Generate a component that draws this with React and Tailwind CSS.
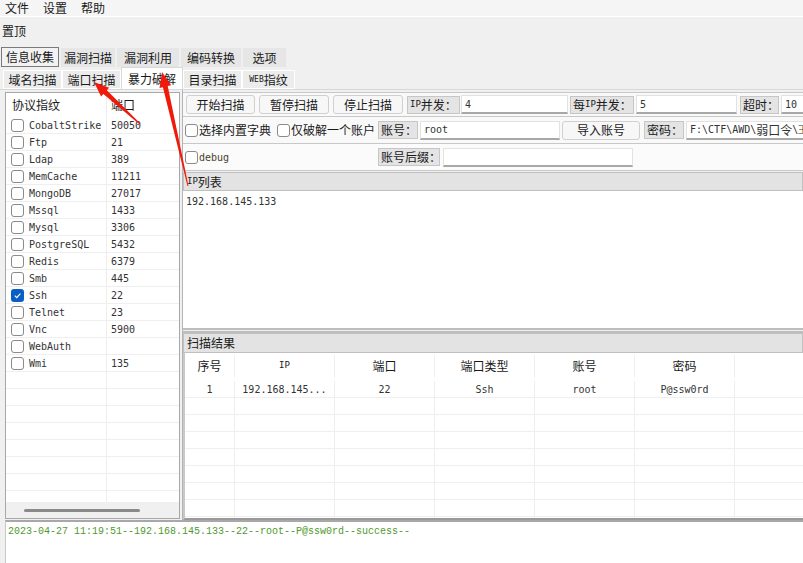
import React from "react";

const CJK = { fontFamily: '"Noto Sans CJK SC", "Noto Sans", sans-serif' };
const MONO = { fontFamily: '"DejaVu Sans Mono", "Liberation Mono", monospace' };
const LMONO = { fontFamily: '"Liberation Mono", "DejaVu Sans Mono", monospace' };

const protocols = [
  ["CobaltStrike", "50050"],
  ["Ftp", "21"],
  ["Ldap", "389"],
  ["MemCache", "11211"],
  ["MongoDB", "27017"],
  ["Mssql", "1433"],
  ["Mysql", "3306"],
  ["PostgreSQL", "5432"],
  ["Redis", "6379"],
  ["Smb", "445"],
  ["Ssh", "22", true],
  ["Telnet", "23"],
  ["Vnc", "5900"],
  ["WebAuth", ""],
  ["Wmi", "135"],
];

function Box({ checked }) {
  if (checked) {
    return (
      <div className="w-[13px] h-[13px] rounded-[3px] bg-[#0a5fc4] flex items-center justify-center shrink-0">
        <svg width="9" height="9" viewBox="0 0 10 10">
          <path d="M2 5.2 L4.1 7.3 L8.2 2.8" fill="none" stroke="#ffffff" strokeWidth="1.3" />
        </svg>
      </div>
    );
  }
  return <div className="w-[13px] h-[13px] rounded-[3px] border border-[#8a8a8a] bg-white shrink-0" />;
}

function Btn({ w, ml, children }) {
  return (
    <div
      className={`h-[19px] ${w} ${ml} rounded-[3px] border border-[#d0d0d0] bg-[#f7f7f7] flex items-center justify-center text-[12px] text-[#1a1a1a] shrink-0 whitespace-nowrap`}
      style={CJK}
    >
      {children}
    </div>
  );
}

function Label({ w, ml, children }) {
  return (
    <div
      className={`h-[18px] ${w} ${ml} border border-[#c6c6c6] bg-[#e4e4e4] flex items-center pl-[2px] text-[12px] text-[#1a1a1a] shrink-0 whitespace-nowrap overflow-hidden`}
      style={CJK}
    >
      {children}
    </div>
  );
}

function Input({ w, ml, children }) {
  return (
    <div
      className={`h-[19px] ${w} ${ml} bg-white border border-[#e2e2e2] border-b-[#a8a8a8] border-b-2 flex items-center pl-[3px] text-[10px] text-[#333] shrink-0 whitespace-nowrap overflow-hidden`}
      style={MONO}
    >
      {children}
    </div>
  );
}

const IP = ({ children }) => (
  <span className="text-[9px]" style={MONO}>
    {children}
  </span>
);

function Arrows() {
  return (
    <svg className="absolute left-0 top-0 pointer-events-none" width="803" height="563">
      <polygon
        fill="#f01a0a"
        points="140.3,123.6 106.8,90.3 109.1,87.7 94,82 101.1,96.5 103.4,93.9 139.7,124.4"
      />
      <polygon
        fill="#f01a0a"
        points="188.5,185.9 167.7,86.1 171.2,85.3 162,72 159.5,87.9 162.9,87.2 187.5,186.1"
      />
    </svg>
  );
}

export default function App() {
  const emptyRows = Array.from({ length: 9 });
  const tableRows = Array.from({ length: 8 });
  const cols = ["w-[50px]", "w-[100px]", "w-[100px]", "w-[100px]", "w-[100px]", "w-[100px]"];
  return (
    <div className="relative w-[803px] h-[563px] overflow-hidden bg-[#f0f0f0] flex flex-col text-[#1a1a1a]" style={CJK}>
      {/* menu bar */}
      <div className="h-[16px] bg-[#f5f5f5] flex items-center text-[12px] shrink-0">
        <span className="ml-[5px]">文件</span>
        <span className="ml-[14px]">设置</span>
        <span className="ml-[14px]">帮助</span>
      </div>
      <div className="h-[1px] bg-[#ffffff] shrink-0" />
      {/* 置顶 */}
      <div className="h-[29px] flex items-center text-[12px] shrink-0 pb-[2px]">
        <span className="ml-[2px]">置顶</span>
      </div>
      {/* tab row 1 */}
      <div className="h-[21px] flex items-end text-[12px] shrink-0 pl-[1px]">
        <div className="h-[20px] w-[58px] border border-[#7a7a7a] bg-[#f2f2f2] flex items-center justify-center">信息收集</div>
        <div className="h-[19px] w-[54px] ml-[2px] bg-[#e6e6e6] flex items-center justify-center">漏洞扫描</div>
        <div className="h-[19px] w-[62px] ml-[2px] bg-[#e6e6e6] flex items-center justify-center">漏洞利用</div>
        <div className="h-[19px] w-[60px] ml-[2px] bg-[#e6e6e6] flex items-center justify-center">编码转换</div>
        <div className="h-[19px] w-[43px] ml-[2px] bg-[#e6e6e6] flex items-center justify-center">选项</div>
      </div>
      {/* tab row 2 */}
      <div className="h-[22px] flex items-end text-[12px] shrink-0 pl-[3px]">
        <div className="h-[19px] w-[59px] bg-[#ececec] border border-[#ffffff] flex items-center justify-center">域名扫描</div>
        <div className="h-[19px] w-[59px] bg-[#ececec] border border-[#ffffff] flex items-center justify-center">端口扫描</div>
        <div className="h-[22px] w-[62px] bg-white border border-[#d8d8d8] border-b-0 flex items-center justify-center">暴力破解</div>
        <div className="h-[19px] w-[59px] bg-[#ececec] border border-[#ffffff] flex items-center justify-center">目录扫描</div>
        <div className="h-[19px] w-[53px] bg-[#ececec] border border-[#ffffff] flex items-center justify-center">
          <span className="text-[8px]" style={MONO}>WEB</span>指纹
        </div>
      </div>
      {/* main */}
      <div className="flex-1 flex min-h-0 bg-white border-t border-[#d8d8d8]">
        {/* left panel */}
        <div className="pl-[5px] pt-[2px] pb-[1px] flex bg-[#f0f0f0]">
          <div className="w-[175px] bg-white border border-[#a8a8a8] flex flex-col min-h-0">
            <div className="h-[24px] flex items-center text-[12px] shrink-0">
              <div className="w-[101px] pl-[6px] h-full flex items-center border-r border-[#eeeeee]">协议指纹</div>
              <div className="pl-[4px]">端口</div>
            </div>
            <div className="flex-1 min-h-0 overflow-hidden">
              {protocols.map(([name, port, checked]) => (
                <div key={name} className="h-[17px] flex items-center border-b border-[#efefef]">
                  <div className="w-[101px] h-full flex items-center pl-[5px] border-r border-[#eeeeee]">
                    <Box checked={checked} />
                    <span className="ml-[5px] text-[10px] text-[#333]" style={MONO}>{name}</span>
                  </div>
                  <span className="ml-[4px] text-[10px] text-[#333]" style={MONO}>{port}</span>
                </div>
              ))}
              {emptyRows.map((_, i) => (
                <div key={i} className="h-[17px] flex border-b border-[#efefef]">
                  <div className="w-[101px] h-full border-r border-[#eeeeee]" />
                </div>
              ))}
            </div>
            <div className="h-[16px] bg-[#f0f0f0] flex items-center shrink-0">
              <div className="ml-[18px] w-[116px] h-[3px] rounded-full bg-[#8a8a8a]" />
            </div>
          </div>
        </div>
        {/* splitter */}
        <div className="w-[3px] bg-[#f0f0f0] border-r border-[#b4b4b4]" />
        {/* right panel */}
        <div className="flex-1 flex flex-col min-w-0 bg-[#f0f0f0] pt-[2px]">
          {/* row1 */}
          <div className="h-[25px] flex items-center pl-[3px] bg-[#f9f9f9] border-t border-b border-[#c8c8c8] shrink-0">
            <Btn w="w-[69px]" ml="">开始扫描</Btn>
            <Btn w="w-[70px]" ml="ml-[4px]">暂停扫描</Btn>
            <Btn w="w-[70px]" ml="ml-[4px]">停止扫描</Btn>
            <Label w="w-[53px]" ml="ml-[4px]"><IP>IP</IP>并发：</Label>
            <Input w="w-[107px]" ml="ml-[1px]">4</Input>
            <Label w="w-[64px]" ml="ml-[2px]">每<IP>IP</IP>并发：</Label>
            <Input w="w-[101px]" ml="ml-[2px]">5</Input>
            <Label w="w-[39px]" ml="ml-[3px]">超时：</Label>
            <Input w="w-[40px]" ml="ml-[2px]">10</Input>
          </div>
          {/* row2 */}
          <div className="h-[27px] flex items-center pl-[2px] bg-[#f9f9f9] border-b border-[#c8c8c8] shrink-0 text-[12px] whitespace-nowrap">
            <Box />
            <span className="ml-[1px] shrink-0">选择内置字典</span>
            <div className="ml-[6px] shrink-0"><Box /></div>
            <span className="ml-[1px] shrink-0">仅破解一个账户</span>
            <Label w="w-[40px]" ml="ml-[3px]">账号：</Label>
            <Input w="w-[140px]" ml="ml-[2px]">root</Input>
            <Btn w="w-[78px]" ml="ml-[2px]">导入账号</Btn>
            <Label w="w-[40px]" ml="ml-[4px]">密码：</Label>
            <Input w="w-[130px]" ml="ml-[2px]">
              F:\CTF\AWD\<span style={CJK} className="text-[12px]">弱口令</span>\王
            </Input>
          </div>
          {/* row3 */}
          <div className="h-[27px] flex items-center pl-[2px] bg-[#fbfbfb] border-b border-[#c8c8c8] shrink-0">
            <Box />
            <span className="ml-[1px] text-[10px] text-[#4a3f2a]" style={MONO}>debug</span>
            <Label w="w-[62px]" ml="ml-[149px]">账号后缀：</Label>
            <Input w="w-[190px]" ml="ml-[3px]"></Input>
          </div>
          {/* IP 列表 */}
          <div className="h-[19px] mt-[1px] flex items-center pl-[3px] bg-[#e3e3e3] border border-[#c0c0c0] text-[12px] shrink-0">
            <IP>IP</IP>列表
          </div>
          <div className="h-[137px] bg-white pl-[3px] pt-[5px] shrink-0 text-[10px] leading-[12px] text-[#333]" style={MONO}>
            192.168.145.133
          </div>
          <div className="h-[5px] border-t-2 border-b-2 border-[#bdbdbd] bg-[#f0f0f0] shrink-0" />
          {/* 扫描结果 */}
          <div className="h-[20px] flex items-center pl-[3px] bg-[#e3e3e3] border border-[#c0c0c0] text-[12px] shrink-0">
            扫描结果
          </div>
          <div className="flex-1 min-h-0 bg-white border-l-2 border-[#c8c8c8] border-b-2 border-b-[#9a9a9a] overflow-hidden">
            <div className="h-[28px] flex text-[12px]">
              {["序号", "IP", "端口", "端口类型", "账号", "密码"].map((h, i) => (
                <div key={h} className={`${cols[i]} h-[22px] mt-[2px] flex items-center justify-center border-r border-[#eeeeee] shrink-0`}>
                  {h === "IP" ? <IP>IP</IP> : h}
                </div>
              ))}
            </div>
            <div className="h-[17px] flex items-center border-b border-[#efefef] text-[10px] text-[#333]" style={MONO}>
              {["1", "192.168.145...", "22", "Ssh", "root", "P@ssw0rd"].map((c, i) => (
                <div key={i} className={`${cols[i]} h-full flex items-center justify-center border-r border-[#eeeeee] shrink-0`}>
                  {c}
                </div>
              ))}
            </div>
            {tableRows.map((_, r) => (
              <div key={r} className="h-[17px] flex border-b border-[#efefef]">
                {cols.map((c, i) => (
                  <div key={i} className={`${c} h-full border-r border-[#eeeeee] shrink-0`} />
                ))}
              </div>
            ))}
          </div>
        </div>
      </div>
      {/* log */}
      <div
        className="h-[43px] bg-white border-t-2 border-[#a8a8a8] border-l border-l-[#c8c8c8] ml-[5px] shrink-0 pl-[2px] pt-[4px] text-[10px] leading-[12px] text-[#4f9a2e]"
        style={LMONO}
      >
        2023-04-27 11:19:51--192.168.145.133--22--root--P@ssw0rd--success--
      </div>
      <Arrows />
    </div>
  );
}
